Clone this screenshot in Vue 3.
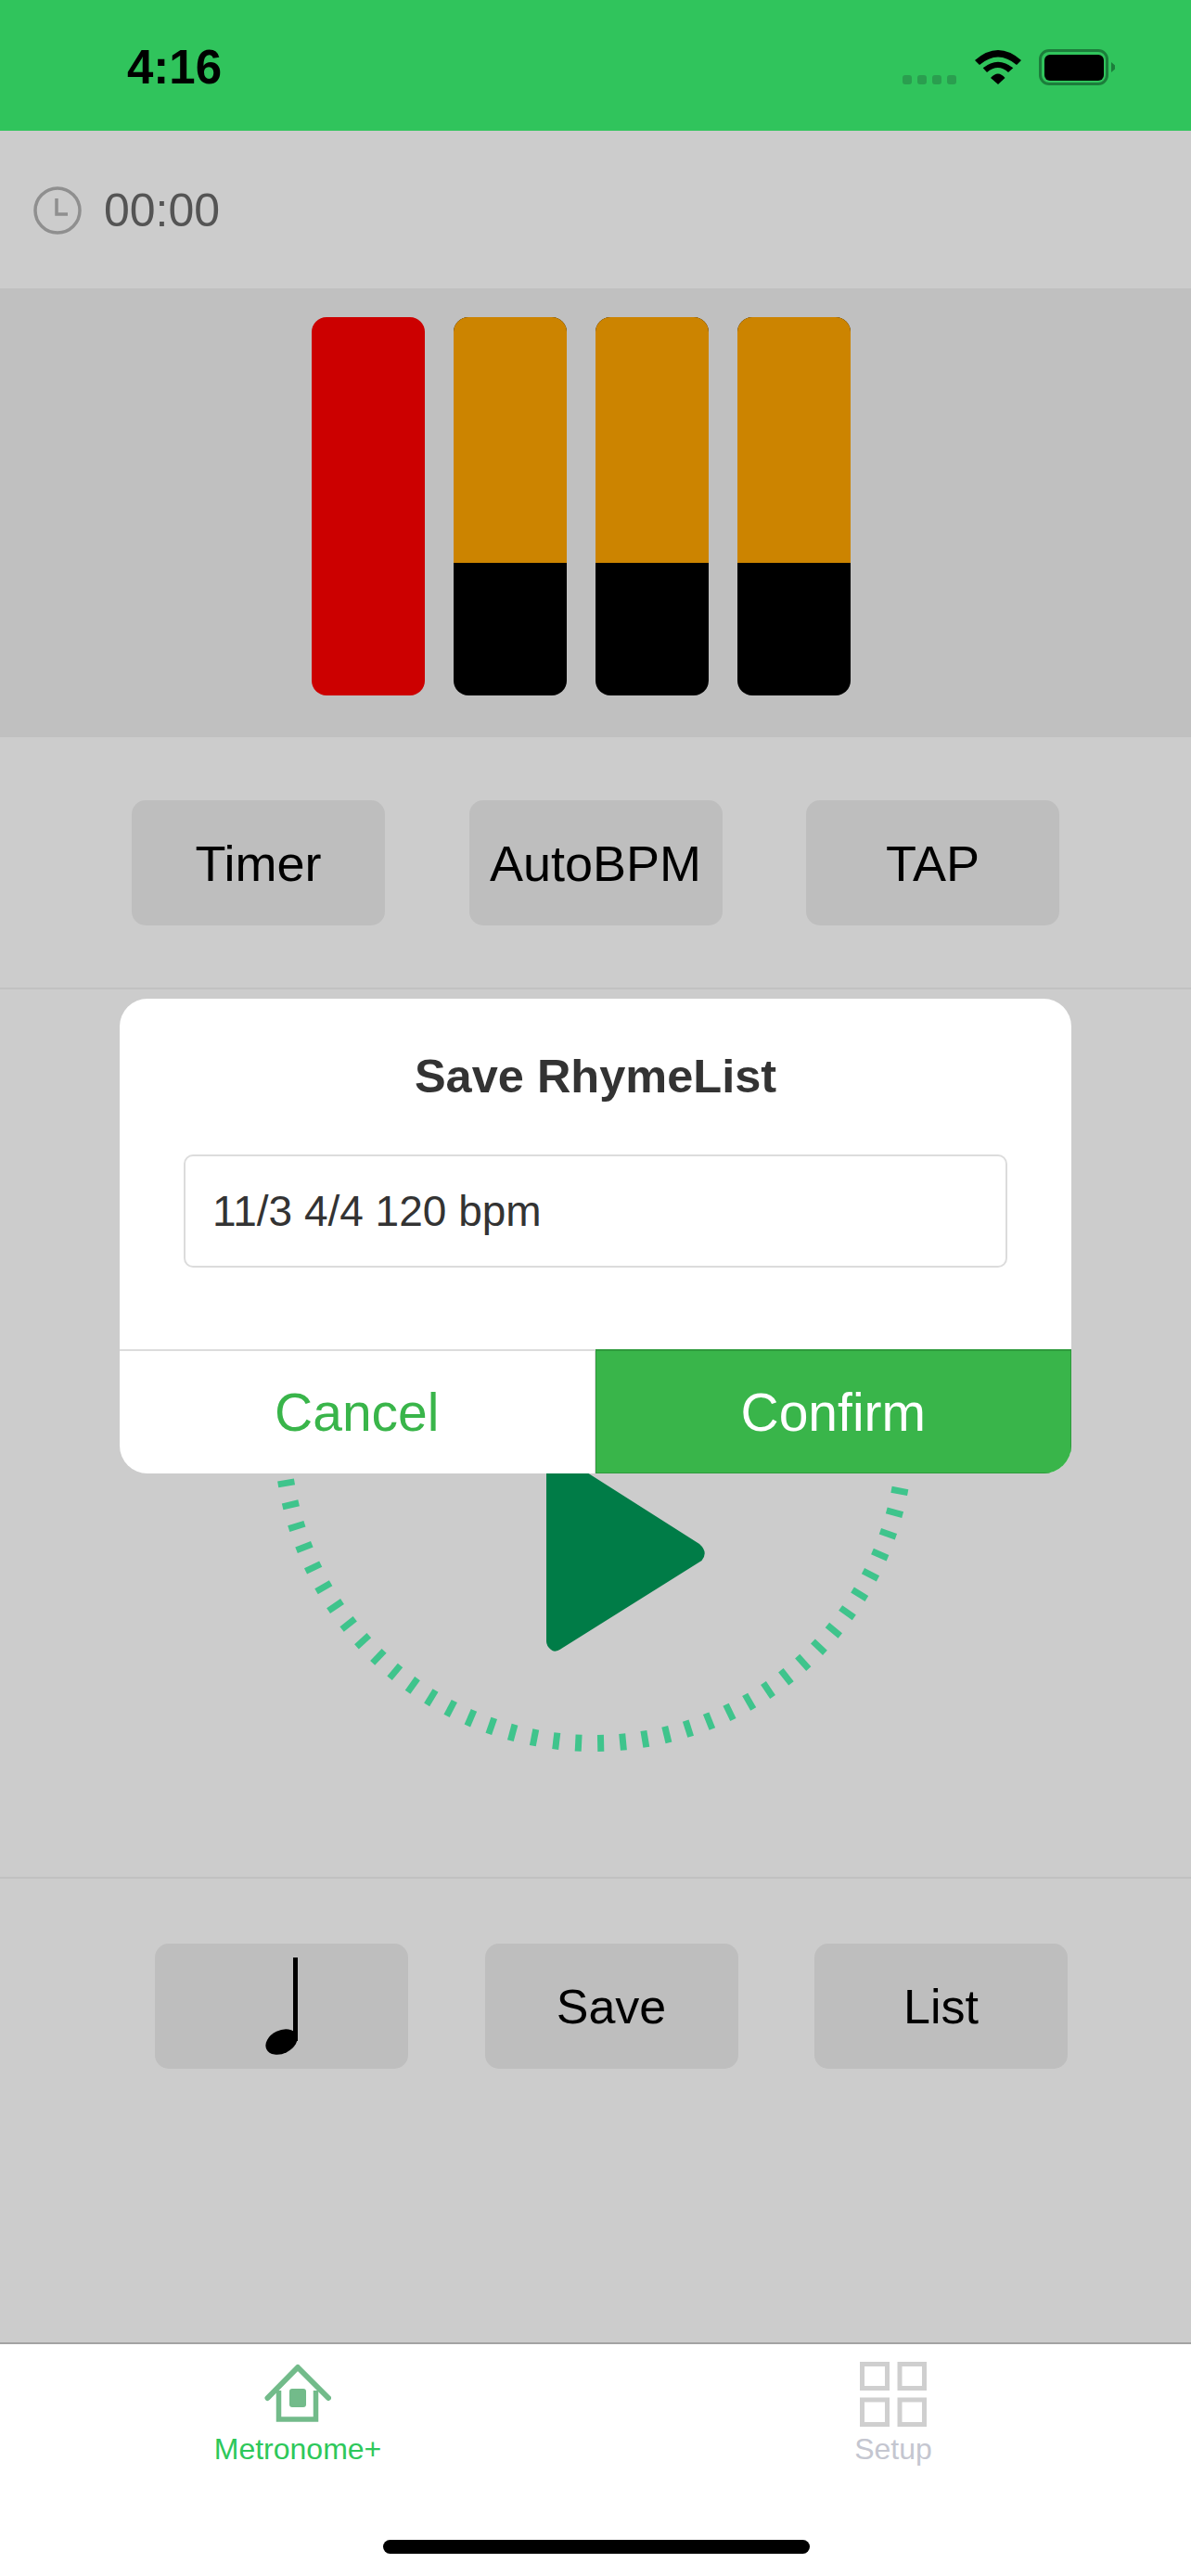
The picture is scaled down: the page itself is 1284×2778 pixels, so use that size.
<script setup>
import { computed } from 'vue'

// Marcas del dial: 88 rayitas alrededor del centro
const cx = 640
const cy = 477
const ticks = computed(() => {
  const out = []
  for (let i = 0; i < 88; i++) {
    const a = ((1.3 + i * (360 / 88)) * Math.PI) / 180
    out.push({
      x1: cx + Math.sin(a) * 327,
      y1: cy + Math.cos(a) * 327,
      x2: cx + Math.sin(a) * 345,
      y2: cy + Math.cos(a) * 345
    })
  }
  return out
})

const beats = [
  { id: 1, fill: 100, color: '#ff0000' },
  { id: 2, fill: 65, color: '#ffa500' },
  { id: 3, fill: 65, color: '#ffa500' },
  { id: 4, fill: 65, color: '#ffa500' }
]
</script>

<template>
  <div class="phone">
    <header class="status">
      <span class="time">4:16</span>
      <div class="status-icons">
        <div class="signal"><i></i><i></i><i></i><i></i></div>
        <svg class="wifi" width="50" height="38" viewBox="0 0 50 38">
          <path d="M0 11 Q25 -11 50 11 L45 16 Q25 -1 5 16 Z" fill="#000" />
          <path d="M8.7 19.3 Q25 6 41.3 19.3 L36 24 Q25 14 13 24 Z" fill="#000" />
          <path d="M17 30 Q25 21 32.5 30 L25 37 Z" fill="#000" />
        </svg>
        <div class="battery"><div class="battery-level"></div></div>
        <svg class="battery-nub" width="4" height="11" viewBox="0 0 4 11">
          <path d="M0 0 L4 3.5 V7.5 L0 11 Z" fill="#1c7d3b" />
        </svg>
      </div>
    </header>

    <main class="content">
      <div class="timer-row">
        <svg width="52" height="52" viewBox="0 0 52 52">
          <circle cx="26" cy="26" r="24" fill="none" stroke="#b3b3b3" stroke-width="3.5" />
          <path d="M25 13 V30 H37" fill="none" stroke="#b3b3b3" stroke-width="3.5" />
        </svg>
        <span class="timer-text">00:00</span>
      </div>

      <section class="beats">
        <div v-for="b in beats" :key="b.id" class="beat">
          <div class="beat-fill" :style="{ height: b.fill + '%', background: b.color }"></div>
        </div>
      </section>

      <div class="btn-row top-row">
        <div class="btn">Timer</div>
        <div class="btn">AutoBPM</div>
        <div class="btn">TAP</div>
      </div>

      <section class="dial">
        <svg width="1284" height="957" viewBox="0 0 1284 957">
          <line
            v-for="(t, i) in ticks"
            :key="i"
            :x1="t.x1"
            :y1="t.y1"
            :x2="t.x2"
            :y2="t.y2"
            stroke="#4ff5b0"
            stroke-width="7"
          />
          <path
            d="M589 510 Q589 493 603 502 L754 598 Q764 607 756.5 616 L605 711 Q598 716 594 712 Q589 708 589 703 Z"
            fill="#009b59"
          />
        </svg>
      </section>

      <div class="btn-row bottom-row">
        <div class="btn">
          <svg width="40" height="110" viewBox="0 0 40 110">
            <rect x="32" y="2" width="5" height="90" fill="#000" />
            <ellipse cx="19.5" cy="93" rx="18" ry="12.5" transform="rotate(-26 19.5 93)" fill="#000" />
          </svg>
        </div>
        <div class="btn small">Save</div>
        <div class="btn small">List</div>
      </div>

      <div class="mask"></div>

      <div class="modal">
        <h2 class="modal-title">Save RhymeList</h2>
        <div class="modal-input">11/3 4/4 120 bpm</div>
        <div class="modal-footer">
          <div class="modal-btn cancel">Cancel</div>
          <div class="modal-btn confirm">Confirm</div>
        </div>
      </div>
    </main>

    <nav class="tabbar">
      <div class="tab active">
        <svg width="72" height="70" viewBox="0 0 72 70">
          <path d="M3.5 39 L36 6 L69 39" fill="none" stroke="#72bb8a" stroke-width="6" stroke-linecap="round" stroke-linejoin="round" />
          <path d="M15.5 31 V62 H55.5 V31" fill="none" stroke="#72bb8a" stroke-width="5.5" />
          <rect x="27" y="29" width="18" height="20" rx="3" fill="#72bb8a" />
        </svg>
        <span>Metronome+</span>
      </div>
      <div class="tab">
        <svg width="72" height="70" viewBox="0 0 72 70">
          <rect x="2.5" y="2.5" width="27" height="26" fill="none" stroke="#cfcfcf" stroke-width="5" />
          <rect x="43" y="2.5" width="26.5" height="26" fill="none" stroke="#cfcfcf" stroke-width="5" />
          <rect x="2.5" y="41" width="27" height="26.5" fill="none" stroke="#cfcfcf" stroke-width="5" />
          <rect x="43" y="41" width="26.5" height="26.5" fill="none" stroke="#cfcfcf" stroke-width="5" />
        </svg>
        <span>Setup</span>
      </div>
      <div class="home-bar"></div>
    </nav>
  </div>
</template>

<style scoped>
.phone {
  width: 1284px;
  height: 2778px;
  display: flex;
  flex-direction: column;
  background: #fff;
  font-family: "Liberation Sans", Arial, sans-serif;
  overflow: hidden;
}

.status {
  height: 141px;
  flex: none;
  background: #30c45c;
  display: flex;
  justify-content: space-between;
  box-sizing: border-box;
  padding: 53px 82px 0 137px;
}

.time {
  font-size: 51px;
  font-weight: 700;
  line-height: 40px;
  color: #000;
}

.status-icons {
  display: flex;
  align-items: flex-start;
}

.signal {
  display: flex;
  gap: 6px;
  margin: 28px 20px 0 0;
}

.signal i {
  width: 10px;
  height: 10px;
  border-radius: 3px;
  background: #2a9e4f;
}

.wifi {
  margin: 1px 19px 0 0;
}

.battery {
  width: 75px;
  height: 39px;
  box-sizing: border-box;
  border: 3.5px solid #1c7d3b;
  border-radius: 11px;
  padding: 2.5px;
}

.battery-level {
  height: 100%;
  background: #000;
  border-radius: 6px;
}

.battery-nub {
  margin: 14px 0 0 3px;
}

.content {
  position: relative;
  flex: 1;
  display: flex;
  flex-direction: column;
}

.timer-row {
  height: 170px;
  flex: none;
  box-sizing: border-box;
  display: flex;
  align-items: center;
  padding: 2px 0 0 36px;
  gap: 24px;
}

.timer-text {
  font-size: 50px;
  color: #6a6a6a;
}

.beats {
  height: 484px;
  flex: none;
  box-sizing: border-box;
  background: #f0f0f0;
  padding: 31px 0 0 336px;
  display: flex;
  gap: 31px;
}

.beat {
  width: 122px;
  height: 408px;
  background: #000;
  border-radius: 16px;
  overflow: hidden;
}

.beat-fill {
  width: 100%;
}

.btn-row {
  display: flex;
  justify-content: space-between;
  flex: none;
}

.top-row {
  height: 272px;
  box-sizing: border-box;
  padding: 68px 142px 0;
  border-bottom: 2px solid #f2f2f2;
}

.btn {
  width: 273px;
  height: 135px;
  background: #eeeeee;
  border-radius: 15px;
  display: flex;
  align-items: center;
  justify-content: center;
  font-size: 54px;
  color: #000;
}

.btn.small {
  font-size: 52px;
}

.dial {
  height: 959px;
  flex: none;
  box-sizing: border-box;
  border-bottom: 2px solid #f2f2f2;
}

.dial svg {
  display: block;
}

.bottom-row {
  padding: 70px 133px 0 167px;
}

.mask {
  position: absolute;
  inset: 0;
  background: rgba(0, 0, 0, 0.2);
}

.modal {
  position: absolute;
  left: 129px;
  top: 936px;
  width: 1026px;
  height: 512px;
  display: flex;
  flex-direction: column;
  background: #fff;
  border-radius: 30px;
  overflow: hidden;
}

.modal-title {
  margin: 0;
  padding-top: 56px;
  height: 168px;
  box-sizing: border-box;
  text-align: center;
  font-size: 50.5px;
  line-height: 56px;
  font-weight: 700;
  color: #333;
}

.modal-input {
  margin: 0 69px;
  height: 122px;
  box-sizing: border-box;
  border: 2px solid #dcdcdc;
  border-radius: 10px;
  padding-left: 29px;
  display: flex;
  align-items: center;
  font-size: 46px;
  color: #333;
}

.modal-footer {
  margin-top: auto;
  height: 134px;
  display: flex;
}

.modal-btn {
  flex: 1;
  display: flex;
  align-items: center;
  justify-content: center;
  font-size: 57px;
  box-sizing: border-box;
}

.cancel {
  color: #39b54a;
  border-top: 2px solid #dcdcdc;
  border-right: 1px solid #dcdcdc;
}

.confirm {
  color: #fff;
  background: #39b54a;
  border: 1px solid #2e9a3c;
  border-top-width: 2px;
}

.tabbar {
  position: relative;
  height: 252px;
  flex: none;
  box-sizing: border-box;
  display: flex;
  background: #fff;
  border-top: 2px solid #a3a3a3;
}

.tab {
  flex: 1;
  display: flex;
  flex-direction: column;
  align-items: center;
  padding-top: 19px;
  font-size: 32px;
  color: #c4c6d0;
}

.tab svg {
  display: block;
  height: 70px;
  margin-bottom: 6px;
}

.tab.active {
  color: #2dc85a;
}

.home-bar {
  position: absolute;
  left: 413px;
  top: 211px;
  width: 460px;
  height: 15px;
  background: #000;
  border-radius: 8px;
}
</style>
<style>
body {
  background: #fff;
}
</style>
